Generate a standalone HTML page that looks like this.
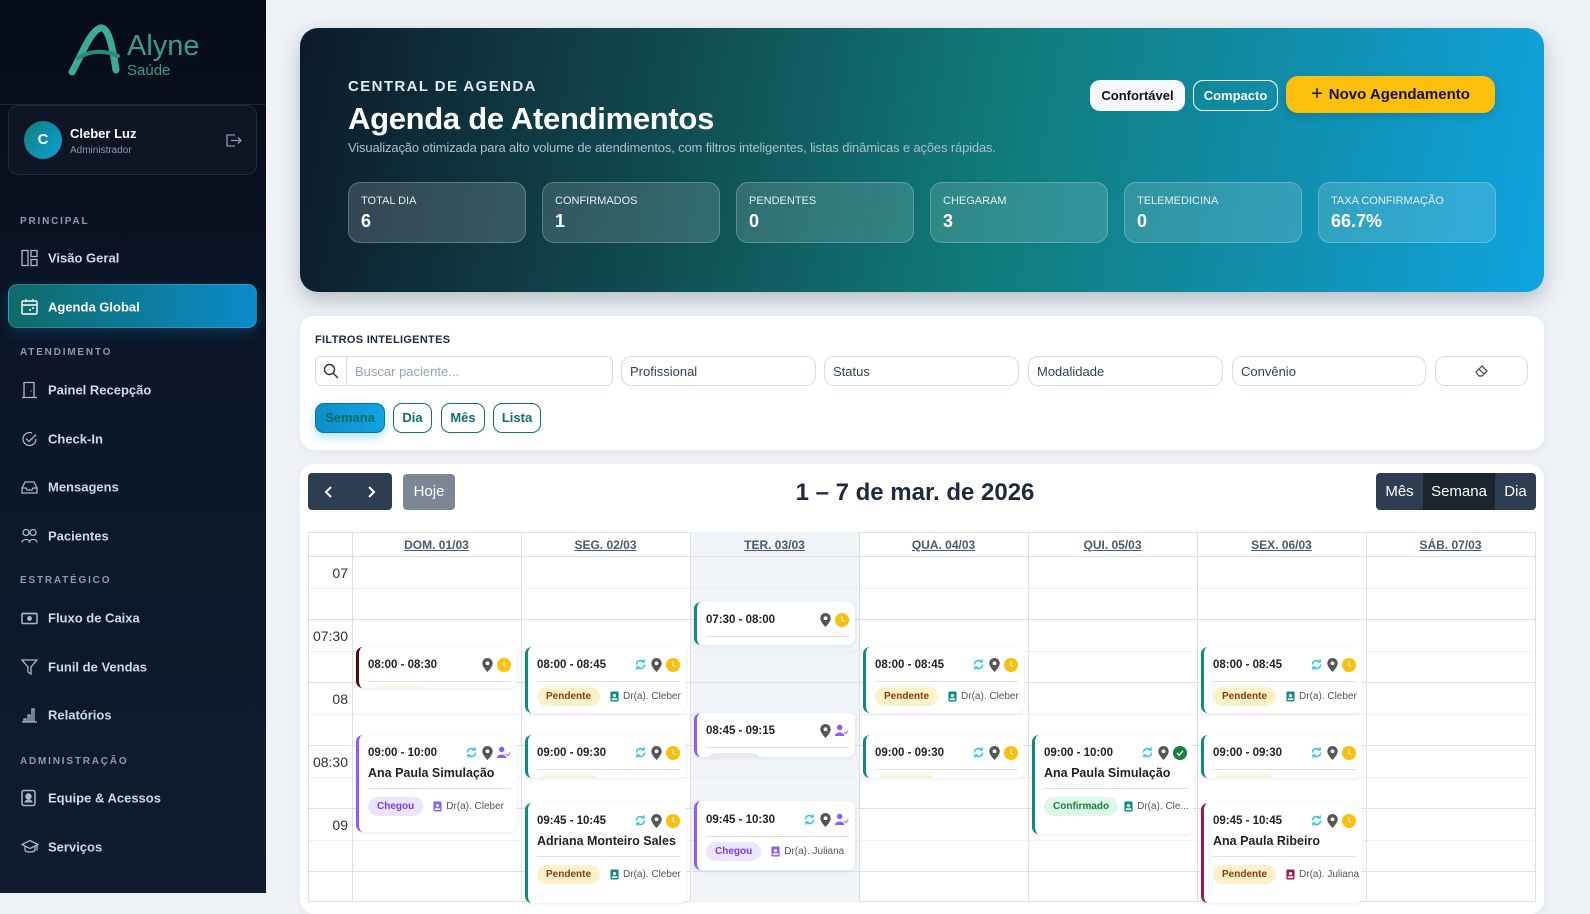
<!DOCTYPE html>
<html><head><meta charset="utf-8"><style>
*{box-sizing:border-box;margin:0;padding:0}
body{width:1590px;height:893px;overflow:hidden;font-family:"Liberation Sans",sans-serif;background:#eef2f6;position:relative}
.abs{position:absolute}
#sb{position:absolute;left:0;top:0;width:266px;height:893px;background:linear-gradient(180deg,#060c18 0%,#0c1628 40%,#101b30 100%)}
.sec{position:absolute;left:20px;font-size:10px;font-weight:bold;letter-spacing:1.8px;color:#8b9ab3}
.nav{position:absolute;left:48px;font-size:13px;font-weight:bold;color:#cfd8e6;transform:translateY(-50%)}
.ni{position:absolute;left:21px;transform:translateY(-50%)}
#hero{position:absolute;left:300px;top:28px;width:1244px;height:264px;border-radius:18px;background:linear-gradient(100deg,#0c1a2b 0%,#114b52 30%,#0f7a78 55%,#1190b0 80%,#0fa4e0 100%);box-shadow:0 8px 20px rgba(15,40,60,.25)}
.stat{position:absolute;top:154px;width:178px;height:61px;border-radius:12px;border:1px solid rgba(255,255,255,.22);background:rgba(255,255,255,.14);color:#fff;padding:12px 0 0 12px}
.stat .l{font-size:11px;color:#e6eef2}
.stat .v{font-size:18px;font-weight:bold;margin-top:4px}
.card{position:absolute;background:#fff;border-radius:14px;box-shadow:0 2px 8px rgba(30,50,80,.06)}
.inp{position:absolute;top:356px;height:30px;border:1px solid #d5dde7;border-radius:10px;background:#fff;font-size:13px;color:#334155;padding:7px 8px}
.chip{position:absolute;top:403px;height:30px;border:1px solid #0f766e;border-radius:9px;font-size:13px;font-weight:bold;color:#0f6e66;text-align:center;line-height:28px}
.dh{position:absolute;top:532px;height:24px;font-size:12px;font-weight:bold;color:#4b5a70;text-decoration:underline;text-align:center;line-height:26px}
.tl{position:absolute;left:308px;width:40px;text-align:right;font-size:14px;color:#333;transform:translateY(-50%)}
.ev{position:absolute;background:#fff;border-left:3px solid #0f8a7e;border-radius:7px;box-shadow:0 1px 4px rgba(0,0,0,.08);overflow:hidden;padding:9px 6px 0 9px}
.ev .r1{display:flex;justify-content:space-between;align-items:center;height:17px;font-size:11.5px;font-weight:bold;color:#222}
.ev .ic{display:flex;gap:4px;align-items:center}
.ev .nm{font-size:12.5px;font-weight:bold;color:#222;margin-top:5px;height:16px}
.ev .dv{border-top:1px solid #dcdfe4;margin-top:8px}
.ev .r2{display:flex;align-items:center;margin-top:5px;font-size:10px;color:#555;gap:6px;white-space:nowrap}
.pill{display:inline-block;height:19px;line-height:19px;padding:0 9px;border-radius:10px;font-size:10px;font-weight:bold}
.pp{background:#fdf1c9;color:#8a3b0a}
.pc{background:#ede5fd;color:#7c3aed}
.pg{background:#dcf8e8;color:#15803d}
.dr{display:inline-flex;align-items:center;gap:4px;margin-left:4px}
</style></head><body>

<div id="sb">
  <svg class="abs" style="left:68px;top:24px" width="56" height="52" viewBox="0 0 56 52"><path d="M4 48 C14 30 22 8 32 4 C40 2 44 20 48 46" stroke="#3ea995" stroke-width="7" fill="none" stroke-linecap="round"/><path d="M10 34 C24 26 36 26 50 32" stroke="#2b8a7a" stroke-width="4" fill="none" stroke-linecap="round"/></svg>
  <div class="abs" style="left:127px;top:30px;font-size:29px;color:#3a9c8a">Alyne</div>
  <div class="abs" style="left:127px;top:62px;font-size:15px;color:#3a9c8a">Saúde</div>
  <div class="abs" style="left:0;top:104px;width:266px;border-top:1px solid #1c2638"></div>
  <div class="abs" style="left:8px;top:105px;width:249px;height:70px;border:1px solid #1f2a3d;border-radius:10px;background:#0e1626"></div>
  <div class="abs" style="left:24px;top:121px;width:38px;height:38px;border-radius:50%;background:linear-gradient(135deg,#0f7f7a,#0ea0d8);color:#fff;font-weight:bold;font-size:15px;text-align:center;line-height:38px">C</div>
  <div class="abs" style="left:70px;top:126px;font-size:13px;font-weight:bold;color:#fff">Cleber Luz</div>
  <div class="abs" style="left:70px;top:145px;font-size:10px;color:#8b97ab">Administrador</div>
  <svg class="abs" style="left:226px;top:134px" width="16" height="13" viewBox="0 0 16 13"><path d="M9 1H1v11h8M5 6.5h10M12 3.5l3 3-3 3" stroke="#8b97ab" stroke-width="1.3" fill="none"/></svg>

  <div class="sec" style="top:216px">PRINCIPAL</div>
  <svg class="ni" style="top:258px" width="17" height="17" viewBox="0 0 17 17" fill="none" stroke="#aab6c8" stroke-width="1.3"><rect x="1" y="1" width="6" height="15"/><rect x="10" y="1" width="6" height="6"/><rect x="10" y="10" width="6" height="6"/></svg>
  <div class="nav" style="top:258px">Visão Geral</div>
  <div class="abs" style="left:8px;top:284px;width:249px;height:44px;border-radius:9px;background:linear-gradient(90deg,#0f6a68,#0a8bc9);box-shadow:0 4px 14px rgba(14,130,200,.3);border:1px solid rgba(255,255,255,.15)"></div>
  <svg class="ni" style="top:307px" width="17" height="16" viewBox="0 0 17 16" fill="none" stroke="#fff" stroke-width="1.4"><rect x="1" y="2" width="15" height="13" rx="1"/><path d="M1 6h15M5 0v3M12 0v3M8 11h2M11 9h2"/></svg>
  <div class="nav" style="top:307px;color:#fff">Agenda Global</div>

  <div class="sec" style="top:347px">ATENDIMENTO</div>
  <svg class="ni" style="top:390px" width="17" height="17" viewBox="0 0 17 17" fill="none" stroke="#aab6c8" stroke-width="1.3"><path d="M3 16V1h10v15M1 16h15M10 9v1"/></svg>
  <div class="nav" style="top:390px">Painel Recepção</div>
  <svg class="ni" style="top:439px" width="17" height="17" viewBox="0 0 17 17" fill="none" stroke="#aab6c8" stroke-width="1.3"><path d="M15 8.5A6.5 6.5 0 1 1 11 2.5"/><path d="M5 8l3 3 7-7"/></svg>
  <div class="nav" style="top:439px">Check-In</div>
  <svg class="ni" style="top:487px" width="17" height="14" viewBox="0 0 17 14" fill="none" stroke="#aab6c8" stroke-width="1.3"><path d="M1 8l3-6h9l3 6v5H1zM1 8h4l1 2h5l1-2h4"/></svg>
  <div class="nav" style="top:487px">Mensagens</div>
  <svg class="ni" style="top:536px" width="17" height="15" viewBox="0 0 17 15" fill="none" stroke="#aab6c8" stroke-width="1.3"><circle cx="5" cy="4" r="3"/><circle cx="12" cy="4" r="3"/><path d="M1 14c0-4 8-4 8 0M8 14c0-4 8-4 8 0"/></svg>
  <div class="nav" style="top:536px">Pacientes</div>

  <div class="sec" style="top:575px">ESTRATÉGICO</div>
  <svg class="ni" style="top:618px" width="17" height="13" viewBox="0 0 17 13" fill="none" stroke="#aab6c8" stroke-width="1.5"><rect x="1" y="2" width="15" height="10" rx="1"/><path d="M1 2h15"/><circle cx="8.5" cy="7" r="1.7" fill="#aab6c8"/></svg>
  <div class="nav" style="top:618px">Fluxo de Caixa</div>
  <svg class="ni" style="top:667px" width="17" height="16" viewBox="0 0 17 16" fill="none" stroke="#aab6c8" stroke-width="1.3"><path d="M1 1h15l-6 7v7l-3-2V8z"/></svg>
  <div class="nav" style="top:667px">Funil de Vendas</div>
  <svg class="ni" style="top:715px" width="17" height="16" viewBox="0 0 17 16" fill="none" stroke="#aab6c8" stroke-width="1.3"><path d="M1 15h15M3 15v-3h2v3M7 15V8h2v7M11 15V2h2v13"/></svg>
  <div class="nav" style="top:715px">Relatórios</div>

  <div class="sec" style="top:756px">ADMINISTRAÇÃO</div>
  <svg class="ni" style="top:798px" width="15" height="17" viewBox="0 0 15 17" fill="none" stroke="#aab6c8" stroke-width="1.5"><rect x="1" y="1" width="13" height="15" rx="2"/><circle cx="7.5" cy="7" r="2.5" fill="#aab6c8"/><path d="M4 13c1-3 6-3 7 0" fill="#aab6c8"/></svg>
  <div class="nav" style="top:798px">Equipe &amp; Acessos</div>
  <svg class="ni" style="top:847px" width="18" height="15" viewBox="0 0 18 15" fill="none" stroke="#aab6c8" stroke-width="1.3"><path d="M1 5l8-4 8 4-8 4zM4 7v4c2 2 8 2 10 0V7M16 5v6"/></svg>
  <div class="nav" style="top:847px">Serviços</div>
</div>

<div id="hero">
  <div class="abs" style="left:48px;top:50px;font-size:15px;font-weight:bold;letter-spacing:1.4px;color:#e3ecef">CENTRAL DE AGENDA</div>
  <div class="abs" style="left:48px;top:73px;font-size:31px;font-weight:bold;color:#fff;letter-spacing:-.3px">Agenda de Atendimentos</div>
  <div class="abs" style="left:48px;top:112px;font-size:13px;color:#a9c1c8;letter-spacing:-.15px">Visualização otimizada para alto volume de atendimentos, com filtros inteligentes, listas dinâmicas e ações rápidas.</div>
  <div class="abs" style="left:790px;top:52px;width:95px;height:31px;border-radius:10px;background:#f6f8fa;font-size:13px;font-weight:bold;color:#111;text-align:center;line-height:31px">Confortável</div>
  <div class="abs" style="left:893px;top:52px;width:85px;height:31px;border-radius:10px;border:1px solid #fff;font-size:13px;font-weight:bold;color:#fff;text-align:center;line-height:29px">Compacto</div>
  <div class="abs" style="left:986px;top:48px;width:209px;height:37px;border-radius:12px;background:#fbbf0c;font-size:15px;font-weight:bold;color:#111;text-align:center;line-height:37px;box-shadow:0 3px 8px rgba(0,0,0,.15)"><span style="font-weight:normal;font-size:20px;vertical-align:-1px;margin-right:6px">+</span>Novo Agendamento</div>
  <div class="stat" style="left:48px;background:rgba(255,255,255,.16)"><div class="l">TOTAL DIA</div><div class="v">6</div></div>
  <div class="stat" style="left:242px"><div class="l">CONFIRMADOS</div><div class="v">1</div></div>
  <div class="stat" style="left:436px"><div class="l">PENDENTES</div><div class="v">0</div></div>
  <div class="stat" style="left:630px"><div class="l">CHEGARAM</div><div class="v">3</div></div>
  <div class="stat" style="left:824px"><div class="l">TELEMEDICINA</div><div class="v">0</div></div>
  <div class="stat" style="left:1018px"><div class="l">TAXA CONFIRMAÇÃO</div><div class="v">66.7%</div></div>
</div>

<div class="card" style="left:300px;top:316px;width:1244px;height:134px"></div>
<div class="abs" style="left:315px;top:334px;font-size:11px;font-weight:bold;color:#1e293b;letter-spacing:.3px">FILTROS INTELIGENTES</div>
<div class="inp" style="left:315px;width:298px;border-radius:6px;padding-left:39px;color:#94a3b8">Buscar paciente...</div>
<div class="abs" style="left:346px;top:357px;height:28px;border-left:1px solid #d5dde7"></div>
<svg class="abs" style="left:323px;top:363px" width="16" height="16" viewBox="0 0 16 16" fill="none" stroke="#333" stroke-width="1.4"><circle cx="6.5" cy="6.5" r="5"/><path d="M10 10l5 5"/></svg>
<div class="inp" style="left:621px;width:195px">Profissional</div>
<div class="inp" style="left:824px;width:195px">Status</div>
<div class="inp" style="left:1028px;width:195px">Modalidade</div>
<div class="inp" style="left:1232px;width:194px">Convênio</div>
<div class="inp" style="left:1435px;width:93px"></div>
<svg class="abs" style="left:1475px;top:365px" width="13" height="12" viewBox="0 0 13 12" fill="none" stroke="#444" stroke-width="1.2"><path d="M1 7l6-6 5 5-5 5H4zM4 4l5 5"/></svg>
<div class="chip" style="left:315px;width:70px;background:linear-gradient(90deg,#0c8fc8,#12a3e6);box-shadow:0 4px 10px rgba(14,165,233,.35);color:#0d6b5e">Semana</div>
<div class="chip" style="left:393px;width:39px">Dia</div>
<div class="chip" style="left:441px;width:44px">Mês</div>
<div class="chip" style="left:493px;width:48px">Lista</div>

<div class="card" style="left:300px;top:464px;width:1244px;height:450px"></div>
<div class="abs" style="left:308px;top:473px;width:84px;height:37px;background:#2c3e50;border-radius:4px"></div>
<svg class="abs" style="left:324px;top:486px" width="10" height="12" viewBox="0 0 10 12" fill="none" stroke="#fff" stroke-width="2"><path d="M7 1L2 6l5 5"/></svg>
<svg class="abs" style="left:366px;top:486px" width="10" height="12" viewBox="0 0 10 12" fill="none" stroke="#fff" stroke-width="2"><path d="M3 1l5 5-5 5"/></svg>
<div class="abs" style="left:403px;top:474px;width:52px;height:36px;background:#7b8794;border-radius:4px;color:#fff;font-size:15px;text-align:center;line-height:36px">Hoje</div>
<div class="abs" style="left:700px;top:479px;width:430px;text-align:center;font-size:24px;font-weight:bold;color:#1e293b">1 – 7 de mar. de 2026</div>
<div class="abs" style="left:1376px;top:473px;width:160px;height:37px;background:#2c3e50;border-radius:4px;color:#fff;font-size:15px;line-height:37px">
  <span class="abs" style="left:0;width:47px;text-align:center">Mês</span>
  <span class="abs" style="left:47px;width:72px;text-align:center;background:#1a2530;height:37px">Semana</span>
  <span class="abs" style="left:119px;width:41px;text-align:center">Dia</span>
</div>

<!-- grid -->
<div class="abs" style="left:308px;top:532px;width:1228px;height:370px;border:1px solid #dde1e6;background:#fff"></div>
<div class="abs" style="left:690px;top:532px;width:169px;height:370px;background:#f1f4f8"></div>
<div class="abs" style="left:308px;top:556px;width:1228px;border-top:1px solid #dde1e6"></div>
<div class="abs" style="left:308px;top:619px;width:1228px;border-top:1px solid #dde1e6"></div>
<div class="abs" style="left:308px;top:682px;width:1228px;border-top:1px solid #dde1e6"></div>
<div class="abs" style="left:308px;top:745px;width:1228px;border-top:1px solid #dde1e6"></div>
<div class="abs" style="left:308px;top:808px;width:1228px;border-top:1px solid #dde1e6"></div>
<div class="abs" style="left:308px;top:871px;width:1228px;border-top:1px solid #dde1e6"></div>
<div class="abs" style="left:308px;top:588px;width:1228px;border-top:1px dotted #e3e6ea"></div>
<div class="abs" style="left:308px;top:651px;width:1228px;border-top:1px dotted #e3e6ea"></div>
<div class="abs" style="left:308px;top:714px;width:1228px;border-top:1px dotted #e3e6ea"></div>
<div class="abs" style="left:308px;top:777px;width:1228px;border-top:1px dotted #e3e6ea"></div>
<div class="abs" style="left:308px;top:840px;width:1228px;border-top:1px dotted #e3e6ea"></div>
<div class="abs" style="left:352px;top:532px;height:370px;border-left:1px solid #dde1e6"></div>
<div class="abs" style="left:521px;top:532px;height:370px;border-left:1px solid #dde1e6"></div>
<div class="abs" style="left:690px;top:532px;height:370px;border-left:1px solid #dde1e6"></div>
<div class="abs" style="left:859px;top:532px;height:370px;border-left:1px solid #dde1e6"></div>
<div class="abs" style="left:1028px;top:532px;height:370px;border-left:1px solid #dde1e6"></div>
<div class="abs" style="left:1197px;top:532px;height:370px;border-left:1px solid #dde1e6"></div>
<div class="abs" style="left:1366px;top:532px;height:370px;border-left:1px solid #dde1e6"></div>
<div class="dh" style="left:352px;width:169px">DOM. 01/03</div>
<div class="dh" style="left:521px;width:169px">SEG. 02/03</div>
<div class="dh" style="left:690px;width:169px">TER. 03/03</div>
<div class="dh" style="left:859px;width:169px">QUA. 04/03</div>
<div class="dh" style="left:1028px;width:169px">QUI. 05/03</div>
<div class="dh" style="left:1197px;width:169px">SEX. 06/03</div>
<div class="dh" style="left:1366px;width:169px">SÁB. 07/03</div>
<div class="tl" style="top:573px">07</div>
<div class="tl" style="top:636px">07:30</div>
<div class="tl" style="top:699px">08</div>
<div class="tl" style="top:762px">08:30</div>
<div class="tl" style="top:825px">09</div>

<svg width="0" height="0" style="position:absolute">
  <symbol id="sy" viewBox="0 0 16 16"><path d="M3 8a5 5 0 0 1 8.5-3.5M13 8a5 5 0 0 1-8.5 3.5" stroke="#22c3e6" stroke-width="1.7" fill="none"/><path d="M12.5 1.5v3.5H9M3.5 14.5V11H7" stroke="#22c3e6" stroke-width="1.5" fill="none"/></symbol>
  <symbol id="pn" viewBox="0 0 12 16"><path d="M6 0a6 6 0 0 0-6 6c0 4 6 10 6 10s6-6 6-10a6 6 0 0 0-6-6z" fill="#555"/><circle cx="6" cy="6" r="2.2" fill="#fff"/></symbol>
  <symbol id="ck" viewBox="0 0 16 16"><circle cx="8" cy="8" r="8" fill="#fbbf0c"/><path d="M8 4v4.5l2.5 1.5" stroke="#fff" stroke-width="1.3" fill="none"/></symbol>
  <symbol id="ok" viewBox="0 0 16 16"><circle cx="8" cy="8" r="8" fill="#16803d"/><path d="M4.5 8l2.5 2.5 4.5-5" stroke="#fff" stroke-width="1.6" fill="none"/></symbol>
  <symbol id="us" viewBox="0 0 18 16"><circle cx="6" cy="4" r="3.5" fill="#8b5cf6"/><path d="M0 15c0-6 12-6 12 0z" fill="#8b5cf6"/><path d="M12 10l2 2 3-4" stroke="#8b5cf6" stroke-width="1.2" fill="none"/></symbol>
  <symbol id="dt" viewBox="0 0 10 12"><rect x="0.5" y="0.5" width="9" height="11" rx="1" fill="currentColor"/><circle cx="5" cy="5" r="1.8" fill="#fff"/><rect x="2" y="8" width="6" height="2" fill="#fff"/></symbol>
</svg>

<!-- Dom -->
<div class="ev" style="left:356px;top:647px;width:161px;height:41px;border-color:#4a0d12"><div class="r1">08:00 - 08:30<span class="ic"><svg width="11" height="14"><use href="#pn"/></svg><svg width="14" height="14"><use href="#ck"/></svg></span></div><div class="dv"></div><div class="r2"><span class="pill pp">Pendente</span></div></div>
<div class="ev" style="left:356px;top:735px;width:161px;height:97px;border-color:#8b5cf6"><div class="r1">09:00 - 10:00<span class="ic"><svg width="13" height="13"><use href="#sy"/></svg><svg width="11" height="14"><use href="#pn"/></svg><svg width="14" height="13"><use href="#us"/></svg></span></div><div class="nm">Ana Paula Simulação</div><div class="dv" style="margin-top:6px"></div><div class="r2" style="margin-top:8px"><span class="pill pc">Chegou</span><span class="dr" style="color:#555"><svg width="9" height="11" style="color:#8b5cf6"><use href="#dt"/></svg>Dr(a). Cleber</span></div></div>
<!-- Seg -->
<div class="ev" style="left:525px;top:647px;width:161px;height:66px"><div class="r1">08:00 - 08:45<span class="ic"><svg width="13" height="13"><use href="#sy"/></svg><svg width="11" height="14"><use href="#pn"/></svg><svg width="14" height="14"><use href="#ck"/></svg></span></div><div class="dv"></div><div class="r2"><span class="pill pp">Pendente</span><span class="dr"><svg width="9" height="11" style="color:#0f8a7e"><use href="#dt"/></svg>Dr(a). Cleber</span></div></div>
<div class="ev" style="left:525px;top:735px;width:161px;height:43px"><div class="r1">09:00 - 09:30<span class="ic"><svg width="13" height="13"><use href="#sy"/></svg><svg width="11" height="14"><use href="#pn"/></svg><svg width="14" height="14"><use href="#ck"/></svg></span></div><div class="dv"></div><div class="r2"><span class="pill pp">Pendente</span></div></div>
<div class="ev" style="left:525px;top:803px;width:161px;height:100px;padding-top:9px"><div class="r1">09:45 - 10:45<span class="ic"><svg width="13" height="13"><use href="#sy"/></svg><svg width="11" height="14"><use href="#pn"/></svg><svg width="14" height="14"><use href="#ck"/></svg></span></div><div class="nm">Adriana Monteiro Sales</div><div class="dv" style="margin-top:6px"></div><div class="r2" style="margin-top:8px"><span class="pill pp">Pendente</span><span class="dr"><svg width="9" height="11" style="color:#0f8a7e"><use href="#dt"/></svg>Dr(a). Cleber</span></div></div>
<!-- Ter -->
<div class="ev" style="left:694px;top:602px;width:161px;height:43px"><div class="r1">07:30 - 08:00<span class="ic"><svg width="11" height="14"><use href="#pn"/></svg><svg width="14" height="14"><use href="#ck"/></svg></span></div><div class="dv"></div></div>
<div class="ev" style="left:694px;top:713px;width:161px;height:44px;border-color:#8b5cf6"><div class="r1">08:45 - 09:15<span class="ic"><svg width="11" height="14"><use href="#pn"/></svg><svg width="14" height="13"><use href="#us"/></svg></span></div><div class="dv"></div><div class="r2"><span class="pill pc">Chegou</span></div></div>
<div class="ev" style="left:694px;top:801px;width:161px;height:69px;border-color:#8b5cf6"><div class="r1" style="margin-top:1px">09:45 - 10:30<span class="ic"><svg width="13" height="13"><use href="#sy"/></svg><svg width="11" height="14"><use href="#pn"/></svg><svg width="14" height="13"><use href="#us"/></svg></span></div><div class="dv"></div><div class="r2"><span class="pill pc">Chegou</span><span class="dr"><svg width="9" height="11" style="color:#8b5cf6"><use href="#dt"/></svg>Dr(a). Juliana</span></div></div>
<!-- Qua -->
<div class="ev" style="left:863px;top:647px;width:161px;height:66px"><div class="r1">08:00 - 08:45<span class="ic"><svg width="13" height="13"><use href="#sy"/></svg><svg width="11" height="14"><use href="#pn"/></svg><svg width="14" height="14"><use href="#ck"/></svg></span></div><div class="dv"></div><div class="r2"><span class="pill pp">Pendente</span><span class="dr"><svg width="9" height="11" style="color:#0f8a7e"><use href="#dt"/></svg>Dr(a). Cleber</span></div></div>
<div class="ev" style="left:863px;top:735px;width:161px;height:43px"><div class="r1">09:00 - 09:30<span class="ic"><svg width="13" height="13"><use href="#sy"/></svg><svg width="11" height="14"><use href="#pn"/></svg><svg width="14" height="14"><use href="#ck"/></svg></span></div><div class="dv"></div><div class="r2"><span class="pill pp">Pendente</span></div></div>
<!-- Qui -->
<div class="ev" style="left:1032px;top:735px;width:161px;height:99px"><div class="r1">09:00 - 10:00<span class="ic"><svg width="13" height="13"><use href="#sy"/></svg><svg width="11" height="14"><use href="#pn"/></svg><svg width="14" height="14"><use href="#ok"/></svg></span></div><div class="nm">Ana Paula Simulação</div><div class="dv" style="margin-top:6px"></div><div class="r2" style="gap:2px;margin-top:8px"><span class="pill pg">Confirmado</span><span class="dr"><svg width="9" height="11" style="color:#0f8a7e"><use href="#dt"/></svg>Dr(a). Cle...</span></div></div>
<!-- Sex -->
<div class="ev" style="left:1201px;top:647px;width:161px;height:66px"><div class="r1">08:00 - 08:45<span class="ic"><svg width="13" height="13"><use href="#sy"/></svg><svg width="11" height="14"><use href="#pn"/></svg><svg width="14" height="14"><use href="#ck"/></svg></span></div><div class="dv"></div><div class="r2"><span class="pill pp">Pendente</span><span class="dr"><svg width="9" height="11" style="color:#0f8a7e"><use href="#dt"/></svg>Dr(a). Cleber</span></div></div>
<div class="ev" style="left:1201px;top:735px;width:161px;height:43px"><div class="r1">09:00 - 09:30<span class="ic"><svg width="13" height="13"><use href="#sy"/></svg><svg width="11" height="14"><use href="#pn"/></svg><svg width="14" height="14"><use href="#ck"/></svg></span></div><div class="dv"></div><div class="r2"><span class="pill pp">Pendente</span></div></div>
<div class="ev" style="left:1201px;top:803px;width:161px;height:100px;border-color:#9d174d"><div class="r1">09:45 - 10:45<span class="ic"><svg width="13" height="13"><use href="#sy"/></svg><svg width="11" height="14"><use href="#pn"/></svg><svg width="14" height="14"><use href="#ck"/></svg></span></div><div class="nm">Ana Paula Ribeiro</div><div class="dv" style="margin-top:6px"></div><div class="r2" style="margin-top:8px"><span class="pill pp">Pendente</span><span class="dr"><svg width="9" height="11" style="color:#9d174d"><use href="#dt"/></svg>Dr(a). Juliana</span></div></div>

</body></html>
